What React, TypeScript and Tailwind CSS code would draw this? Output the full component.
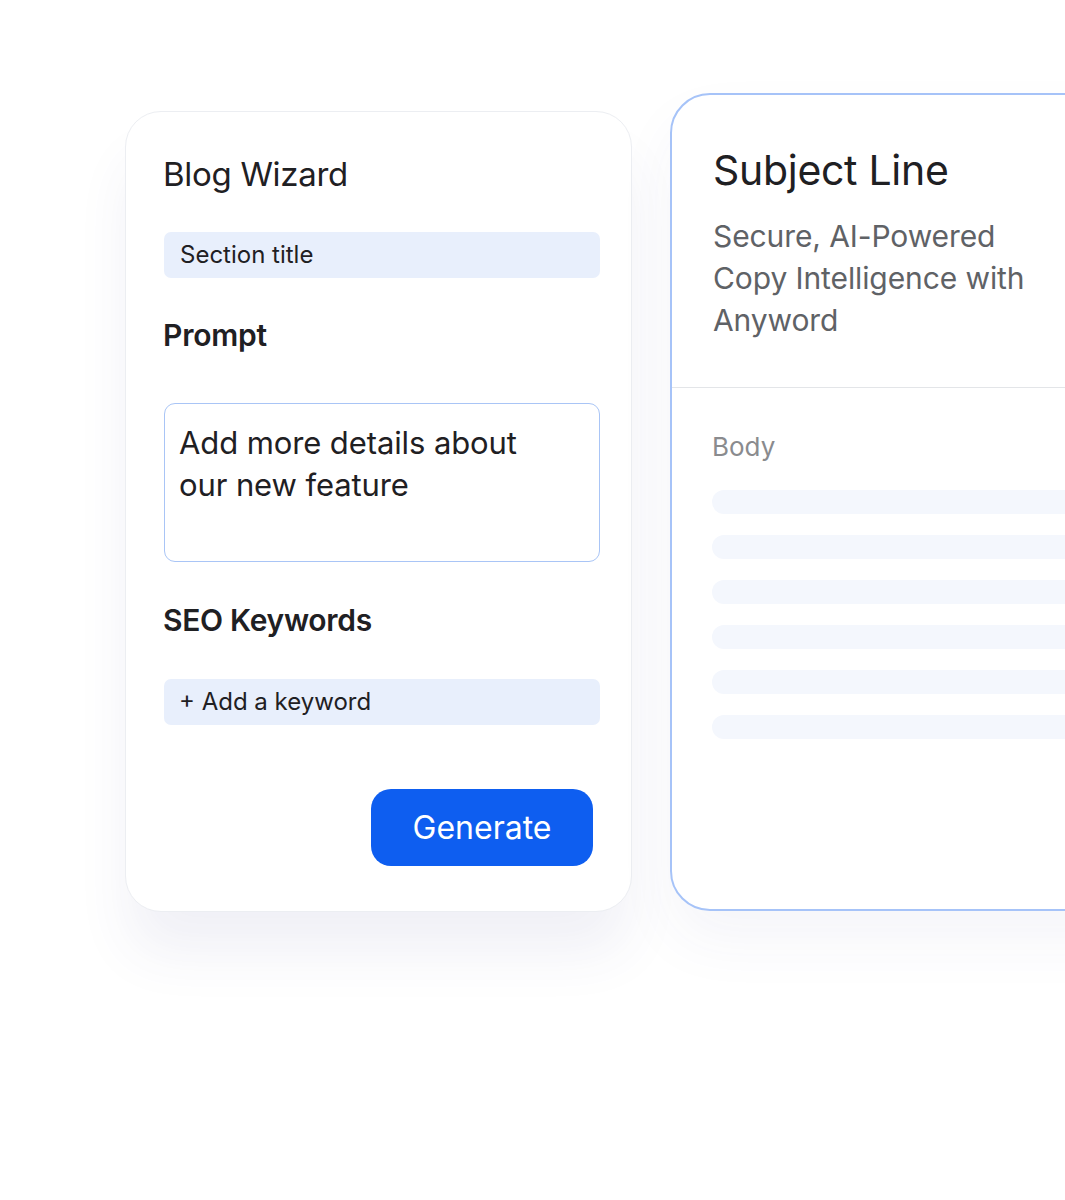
import React from "react";

export default function App() {
  const bars = [0, 1, 2, 3, 4, 5];
  return (
    <div
      className="w-[1065px] h-[1200px] bg-white overflow-hidden"
      style={{ fontFamily: "Inter, 'Noto Sans', sans-serif" }}
    >
      <div className="flex items-start pt-[93px] pl-[125px] gap-[38px]">
        {/* Left card */}
        <div className="mt-[18px] w-[507px] h-[801px] shrink-0 rounded-[36px] bg-white border border-[#eceef2] shadow-[0_45px_55px_-5px_rgba(60,60,140,0.08)] pl-[37px] pr-[32px] pt-[41px] flex flex-col">
          <h1 className="text-[33px] leading-[42px] text-[#1f2023] font-normal tracking-[-0.3px]">Blog Wizard</h1>
          <div className="mt-[37px] w-[436px] h-[46px] rounded-[7px] bg-[#e8effc] flex items-center pl-[16px] text-[24px] text-[#1f2023] ml-[1px]">
            Section title
          </div>
          <div className="mt-[39px] text-[30px] leading-[36px] font-semibold text-[#1f2023] tracking-[-0.2px]">Prompt</div>
          <div className="mt-[50px] ml-[1px] w-[436px] h-[159px] rounded-[11px] border-[1.5px] border-[#a9c5f6] pl-[14px] pt-[18px] text-[31px] leading-[42px] text-[#1f2023] tracking-[-0.1px]">
            Add more details about
            <br />
            our new feature
          </div>
          <div className="mt-[40px] text-[30px] leading-[36px] font-semibold text-[#1f2023] tracking-[-0.3px]">SEO Keywords</div>
          <div className="mt-[41px] ml-[1px] w-[436px] h-[46px] rounded-[7px] bg-[#e8effc] flex items-center pl-[15px] text-[24px] text-[#1f2023]">
            + Add a keyword
          </div>
          <div className="mt-[64px] flex justify-end">
            <button className="w-[222px] h-[77px] rounded-[20px] bg-[#0e5ef0] text-white text-[32px] mr-[6px]">
              Generate
            </button>
          </div>
        </div>

        {/* Right card */}
        <div className="w-[520px] h-[818px] shrink-0 rounded-[40px] bg-white border-2 border-[#a6c3f8] shadow-[0_30px_60px_rgba(60,60,140,0.05)] flex flex-col">
          <div className="pl-[41px] pt-[50px] h-[293px] border-b border-[#e3e5e8]">
            <div className="text-[41px] leading-[50px] text-[#1f2023] tracking-[-0.3px]">Subject Line</div>
            <div className="mt-[20px] text-[30px] leading-[42px] text-[#5f6266] tracking-[-0.1px]">
              Secure, AI-Powered
              <br />
              Copy Intelligence with
              <br />
              Anyword
            </div>
          </div>
          <div className="pl-[40px] pt-[42px]">
            <div className="text-[26px] leading-[34px] text-[#8a8b8e]">Body</div>
            <div className="mt-[26px] flex flex-col gap-[21px]">
              {bars.map((b) => (
                <div key={b} className="h-[24px] rounded-full bg-[#f4f7fd]" />
              ))}
            </div>
          </div>
        </div>
      </div>
    </div>
  );
}
